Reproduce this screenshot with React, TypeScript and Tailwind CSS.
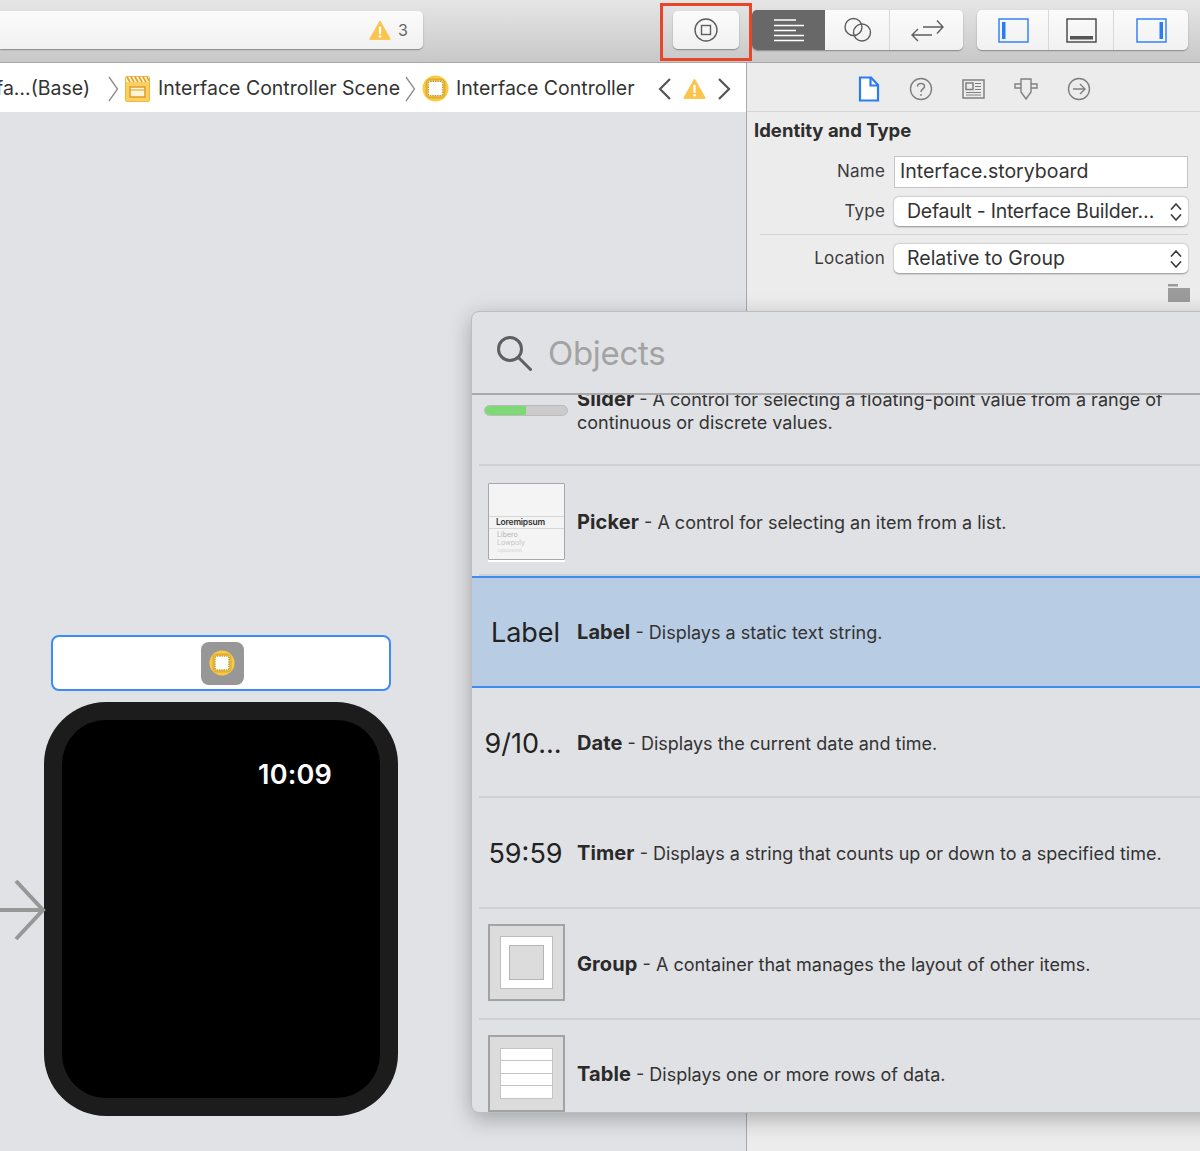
import type { ReactNode } from "react"

const font = "font-['Inter','Liberation_Sans',sans-serif]"

function Warning({ size = 22 }: { size?: number }) {
  return (
    <svg width={size} height={size * 0.92} viewBox="0 0 24 22">
      <path d="M12 1 L23 20.5 Q23.5 21.5 22 21.5 L2 21.5 Q0.5 21.5 1 20.5 Z" fill="#fcc44c" stroke="#fcc44c" strokeLinejoin="round" />
      <rect x="10.8" y="7" width="2.4" height="8.5" rx="1" fill="#fff" />
      <circle cx="12" cy="18" r="1.4" fill="#fff" />
    </svg>
  )
}

function ControllerIcon({ size = 27 }: { size?: number }) {
  return (
    <svg width={size} height={size} viewBox="0 0 28 28">
      <circle cx="14" cy="14" r="13.5" fill="#fdc943" />
      <rect x="6.5" y="6.5" width="15" height="15" rx="2" fill="#fff" stroke="#b99a3c" strokeWidth="1.5" strokeDasharray="1.5 1" />
      <rect x="4.5" y="4.5" width="19" height="19" rx="4" fill="none" stroke="#dcae36" strokeWidth="1.5" />
    </svg>
  )
}

function SceneIcon() {
  return (
    <svg width="25" height="26" viewBox="0 0 25 26">
      <rect x="0.5" y="0.5" width="24" height="25" rx="1.5" fill="#fdcf5e" stroke="#f0b840" />
      <path d="M1 1 H24 V6 H1 Z" fill="#fff3cf" />
      <path d="M2 1 L5 6 M6 1 L9 6 M10 1 L13 6 M14 1 L17 6 M18 1 L21 6 M22 1 L24 5" stroke="#dea02e" strokeWidth="1.5" />
      <rect x="5" y="11" width="15" height="10" fill="#fff4d4" stroke="#d99f2c" strokeWidth="1.5" />
      <path d="M5 14 H20" stroke="#d99f2c" strokeWidth="1" />
    </svg>
  )
}

function Chevron() {
  return (
    <svg width="11" height="26" viewBox="0 0 11 26" className="shrink-0">
      <path d="M1 1 L9.5 13 L1 25" fill="none" stroke="#8c8c8c" strokeWidth="1.3" />
    </svg>
  )
}

function Updown() {
  return (
    <svg width="14" height="22" viewBox="0 0 14 22" className="shrink-0">
      <path d="M2.5 8 L7 3 L11.5 8 M2.5 14 L7 19 L11.5 14" fill="none" stroke="#3d3d3d" strokeWidth="1.7" strokeLinecap="round" strokeLinejoin="round" />
    </svg>
  )
}

function FieldRow({ label, children }: { label: string; children: ReactNode }) {
  return (
    <div className="flex items-center">
      <div className="w-[140px] text-right text-[17px] text-[#3c3c3c] pr-[9px] tracking-[0.2px]">{label}</div>
      {children}
    </div>
  )
}

function Select({ value, tight }: { value: string; tight?: boolean }) {
  return (
    <div className="w-[294px] h-[29px] bg-white rounded-[5px] shadow-[0_0.5px_2px_rgba(0,0,0,0.4)] flex items-center justify-between pl-[13px] pr-[5px] text-[19.5px] text-[#333]">
      <span className={tight ? "tracking-[-0.25px]" : ""}>{value}</span>
      <Updown />
    </div>
  )
}

function Row({ art, title, desc, selected, first, height, shift }: { art: ReactNode; title: string; desc: ReactNode; selected?: boolean; first?: boolean; height?: string; shift?: string }) {
  return (
    <div className={`relative flex shrink-0 ${first ? "h-[71px] items-start" : selected ? "h-[112px] items-center bg-[#b8cce4] border-y-[2px] border-[#3d8af0]" : `${height ?? "h-[110.7px]"} items-center`}`}>
      <div className={`w-[105px] shrink-0 flex justify-center pl-[2px] ${first ? "pt-[10px]" : ""}`}>{art}</div>
      <div className={`text-[18px] text-[#333] ${shift ?? ""} ${first ? "-mt-[7px] w-[600px] leading-[23px]" : "leading-[24px]"}`}>
        <span className="font-bold text-[20px] text-[#2a2a2a] tracking-[0.1px]">{title}</span> - {desc}
      </div>
      {!selected && <div className="absolute left-[7px] right-0 bottom-0 h-[2px] bg-[#cfd0d3]" />}
    </div>
  )
}

function RowText({ children, className }: { children: ReactNode; className?: string }) {
  return <div className={`text-[27px] leading-none text-[#222] whitespace-nowrap ${className ?? ""}`}>{children}</div>
}

function Thumb({ children, className }: { children: ReactNode; className: string }) {
  return <div className={`ml-[2px] w-[77px] h-[77px] bg-[#dcdcdc] border-[2px] border-[#a3a3a3] flex items-center justify-center ${className}`}>{children}</div>
}

export default function App() {
  return (
    <div className={`${font} relative w-[1200px] h-[1151px] overflow-hidden bg-[#e0e2e6] flex flex-col`}>
      {/* toolbar */}
      <div className="h-[63px] shrink-0 bg-gradient-to-b from-[#e6e6e6] to-[#c8c8c8] border-b border-[#a9a9a9] flex items-center pb-[2px]">
        <div className="w-[423px] h-[38px] rounded-r-[5px] bg-gradient-to-b from-[#fbfbfb] to-[#f1f1f1] shadow-[0_1px_1.5px_rgba(0,0,0,0.35)] flex items-center justify-end gap-[7px] pr-[15px] shrink-0">
          <Warning />
          <span className="text-[16px] text-[#666]">3</span>
        </div>
        <div className="relative ml-[250px] w-[66px] h-[38px] rounded-[5px] bg-gradient-to-b from-[#fbfbfb] to-[#f1f1f1] shadow-[0_1px_1.5px_rgba(0,0,0,0.35)] flex items-center justify-center shrink-0">
          <svg width="26" height="26" viewBox="0 0 26 26">
            <circle cx="13" cy="13" r="11" fill="none" stroke="#5e5e5e" strokeWidth="1.4" />
            <rect x="8.5" y="8.5" width="9" height="9" fill="none" stroke="#5e5e5e" strokeWidth="1.4" />
          </svg>
          <div className="absolute -left-[13px] -top-[8.5px] w-[92px] h-[58px] border-[3px] border-[#ea4429]" />
        </div>
        <div className="ml-[13px] w-[211px] h-[40px] flex rounded-[5px] overflow-hidden bg-gradient-to-b from-[#fbfbfb] to-[#f1f1f1] shadow-[0_1px_1.5px_rgba(0,0,0,0.35)] shrink-0">
          <div className="w-[73px] bg-[#686868] flex items-center justify-center">
            <svg width="32" height="24" viewBox="0 0 32 24" stroke="#fff" strokeWidth="1.4">
              <path d="M1 2 H23 M1 7.5 H31 M1 12.5 H23 M1 17.5 H31 M1 22.5 H31" />
            </svg>
          </div>
          <div className="w-[65px] border-r border-[#d8d8d8] flex items-center justify-center">
            <svg width="30" height="26" viewBox="0 0 30 26" fill="none" stroke="#5e5e5e" strokeWidth="1.4">
              <circle cx="11.5" cy="10" r="8.5" />
              <circle cx="20" cy="15.5" r="8.5" />
            </svg>
          </div>
          <div className="flex-1 flex items-center justify-center">
            <svg width="34" height="26" viewBox="0 0 34 26" fill="none" stroke="#5e5e5e" strokeWidth="1.4">
              <path d="M13 10 H33 M27 3.5 L33 10 L27 16.5 M22 18 H2 M8 12 L2 18 L8 24" />
            </svg>
          </div>
        </div>
        <div className="ml-[14px] w-[211px] h-[40px] flex rounded-[5px] bg-gradient-to-b from-[#fbfbfb] to-[#f1f1f1] shadow-[0_1px_1.5px_rgba(0,0,0,0.35)] shrink-0">
          <div className="w-[72px] pl-[2px] border-r border-[#d8d8d8] flex items-center justify-center">
            <svg width="31" height="25" viewBox="0 0 31 25" fill="none">
              <rect x="1" y="1" width="29" height="23" stroke="#2a7cf6" strokeWidth="1.4" />
              <rect x="4" y="4" width="3.5" height="17" fill="#2a7cf6" />
            </svg>
          </div>
          <div className="w-[65px] pl-[1px] border-r border-[#d8d8d8] flex items-center justify-center">
            <svg width="31" height="25" viewBox="0 0 31 25" fill="none">
              <rect x="1" y="1" width="29" height="23" stroke="#444" strokeWidth="1.4" />
              <rect x="4" y="18" width="23" height="3.5" fill="#555" />
            </svg>
          </div>
          <div className="flex-1 flex items-center justify-center">
            <svg width="31" height="25" viewBox="0 0 31 25" fill="none">
              <rect x="1" y="1" width="29" height="23" stroke="#2a7cf6" strokeWidth="1.4" />
              <rect x="23.5" y="4" width="3.5" height="17" fill="#2a7cf6" />
            </svg>
          </div>
        </div>
      </div>

      <div className="flex flex-1 min-h-0">
        {/* editor */}
        <div className="w-[746px] shrink-0 flex flex-col">
          <div className="h-[49px] pt-[2px] bg-white flex items-center text-[19.5px] text-[#333] whitespace-nowrap shrink-0 overflow-hidden">
            <span className="-ml-[4px]">fa…(Base)</span>
            <span className="ml-[18px]"><Chevron /></span>
            <span className="ml-[6px]"><SceneIcon /></span>
            <span className="ml-[8px]">Interface Controller Scene</span>
            <span className="ml-[5px]"><Chevron /></span>
            <span className="ml-[6px]"><ControllerIcon /></span>
            <span className="ml-[7px]">Interface Controller</span>
            <svg width="14" height="24" viewBox="0 0 14 24" className="ml-[23px] shrink-0"><path d="M12 2 L2 12 L12 22" fill="none" stroke="#555" strokeWidth="2.2" /></svg>
            <span className="ml-[11px]"><Warning size={23} /></span>
            <svg width="14" height="24" viewBox="0 0 14 24" className="ml-[11px] shrink-0"><path d="M2 2 L12 12 L2 22" fill="none" stroke="#555" strokeWidth="2.2" /></svg>
          </div>
          <div className="relative flex-1">
            <div className="absolute left-[51px] top-[523px] w-[340px] h-[56px] bg-white border-[2px] border-[#3b8cf7] rounded-[8px] flex items-center justify-center pl-[2px]">
              <div className="w-[43px] h-[43px] bg-[#979797] rounded-[8px] flex items-center justify-center">
                <ControllerIcon size={26} />
              </div>
            </div>
            <div className="absolute left-[44px] top-[590px] w-[354px] h-[414px] bg-[#1c1c1c] rounded-[62px] p-[18px]">
              <div className="w-full h-full bg-black rounded-[44px] flex justify-end pt-[40px] pr-[48px]">
                <span className="text-[27px] leading-[30px] font-semibold text-white tracking-[0.2px]">10:09</span>
              </div>
            </div>
            <svg width="46" height="62" viewBox="0 0 46 62" className="absolute left-0 top-[767px]" fill="none" stroke="#979797" strokeWidth="4">
              <path d="M0 31 H43 M16 2 L43 31 L16 60" />
            </svg>
          </div>
        </div>

        {/* inspector */}
        <div className="flex-1 bg-[#ececec] border-l border-[#a9a9a9] flex flex-col">
          <div className="h-[49px] shrink-0 flex items-center pl-[112px] pt-[4px] gap-[29px] border-b border-[#d4d4d4]">
            <svg width="22" height="26" viewBox="0 0 22 26" fill="none" stroke="#2a7cf6" strokeWidth="2.2" className="-ml-[1px]">
              <path d="M2 1.5 H13 L20 9 V24.5 H2 Z" fill="#fff" />
              <path d="M12.5 2 V9.5 H20" />
            </svg>
            <svg width="24" height="24" viewBox="0 0 24 24" fill="none" stroke="#808080" strokeWidth="1.4">
              <circle cx="12" cy="12" r="10.5" />
              <path d="M8.5 9.5 C8.5 5.5 15.5 5.5 15.5 9.5 C15.5 12 12 12 12 15" strokeWidth="1.6" />
              <circle cx="12" cy="18" r="0.9" fill="#808080" stroke="none" />
            </svg>
            <svg width="23" height="20" viewBox="0 0 23 20" fill="none" stroke="#808080" strokeWidth="1.5">
              <rect x="1" y="1" width="21" height="18" />
              <rect x="4" y="4" width="7" height="6.5" />
              <path d="M13 4.5 H19 M13 7.5 H19 M13 10.5 H19 M4 13.5 H19 M4 16 H19" strokeWidth="1.2" />
            </svg>
            <svg width="24" height="24" viewBox="0 0 24 24" fill="none" stroke="#808080" strokeWidth="1.4">
              <path d="M7 2 H17 V15 L12 22 L7 15 Z M7 7 H1 V11 H7 M17 7 H23 V11 H17" />
            </svg>
            <svg width="24" height="24" viewBox="0 0 24 24" fill="none" stroke="#808080" strokeWidth="1.4">
              <circle cx="12" cy="12" r="10.5" />
              <path d="M6 12 H18 M13 7 L18 12 L13 17" />
            </svg>
          </div>
          <div className="pl-[7px] pt-[7px] text-[18.5px] leading-[22px] font-bold text-[#2e2e2e]">Identity and Type</div>
          <div className="pl-[7px] mt-[15px] flex flex-col gap-[9px]">
            <FieldRow label="Name">
              <div className="w-[294px] h-[32px] bg-white border border-[#c4c4c4] flex items-center pl-[5px] text-[19.5px] text-[#333]">Interface.storyboard</div>
            </FieldRow>
            <FieldRow label="Type"><Select tight value="Default - Interface Builder…" /></FieldRow>
          </div>
          <div className="ml-[13px] mr-[12px] mt-[8px] mb-[9px] h-[1px] bg-[#d2d2d2]" />
          <div className="pl-[7px]">
            <FieldRow label="Location"><Select value="Relative to Group" /></FieldRow>
          </div>
          <div className="flex justify-end pr-[10px] mt-[11px]">
            <svg width="22" height="18" viewBox="0 0 22 18" fill="#9b9b9b">
              <rect x="0" y="0" width="10" height="2.5" />
              <rect x="0" y="4" width="22" height="14" />
            </svg>
          </div>
        </div>
      </div>

      {/* objects popover */}
      <div className="absolute left-[471px] top-[311px] w-[760px] h-[802px] bg-[#e0e1e4] rounded-l-[8px] border border-[#bdbdbd] shadow-[0_6px_22px_rgba(0,0,0,0.28)] flex flex-col overflow-hidden">
        <div className="h-[83px] shrink-0 border-b-[2px] border-[#a9a9aa] flex items-center pl-[24px] gap-[16px]">
          <svg width="36" height="36" viewBox="0 0 36 36" fill="none" stroke="#5f5f5f" strokeWidth="3">
            <circle cx="14" cy="14" r="11.5" />
            <path d="M22.5 22.5 L34.5 34.5" strokeLinecap="round" />
          </svg>
          <span className="text-[33px] leading-none text-[#a3a3a3] tracking-[-0.3px] pt-[1px]">Objects</span>
        </div>
        <div className="flex-1 min-h-0 overflow-hidden flex flex-col w-[729px]">
          <Row
            first
            title="Slider"
            desc={<>A control for selecting a floating-point value from a range of<br />continuous or discrete values.</>}
            art={
              <div className="w-[84px] h-[11px] rounded-full bg-[#cbcbcb] border border-[#bbb] overflow-hidden">
                <div className="w-[41px] h-full bg-[#7dd976]" />
              </div>
            }
          />
          <Row
            height="h-[109.7px]"
            shift="mt-[3px]"
            title="Picker"
            desc="A control for selecting an item from a list."
            art={
              <div className="ml-[2px] mt-[2px] w-[77px] h-[77px] bg-[#f4f4f4] border border-[#a8a8a8] rounded-[1px] flex flex-col pt-[32px] shadow-[0_2px_0_#fff]">
                <div className="h-[13px] border-y border-[#d6d6d6] pl-[7px] text-[8.5px] leading-[11px] font-semibold text-[#333] tracking-[-0.2px]">Loremipsum</div>
                <div className="pl-[8px] text-[7px] leading-[8px] text-[#b5b5b5] mt-[2px]">Libero</div>
                <div className="pl-[8px] text-[7px] leading-[8px] text-[#c4c4c4]">Lowpoly</div>
                <div className="pl-[9px] text-[4px] leading-[7px] text-[#d0d0d0]">Cjdoloremsit</div>
              </div>
            }
          />
          <Row selected shift="mt-[2px]" title="Label" desc="Displays a static text string." art={<RowText className="mt-[2px]">Label</RowText>} />
          <Row title="Date" desc="Displays the current date and time." art={<RowText className="-ml-[5px]">9/10…</RowText>} />
          <Row title="Timer" desc="Displays a string that counts up or down to a specified time." art={<RowText>59:59</RowText>} />
          <Row
            title="Group"
            desc="A container that manages the layout of other items."
            art={
              <Thumb className="-mt-[3px]">
                <div className="w-[53px] h-[53px] bg-white border border-[#bdbdbd] flex items-center justify-center">
                  <div className="w-[35px] h-[35px] bg-[#dcdcdc] border border-[#b5b5b5]" />
                </div>
              </Thumb>
            }
          />
          <Row
            shift="-mt-[2px]"
            title="Table"
            desc="Displays one or more rows of data."
            art={
              <Thumb className="-mt-[4px]">
                <div className="w-[53px] h-[51px] bg-[#c4c4c4] p-[1px] flex flex-col gap-[1px]">
                  <div className="flex-1 bg-white" />
                  <div className="flex-1 bg-white" />
                  <div className="flex-1 bg-white" />
                  <div className="flex-1 bg-white" />
                </div>
              </Thumb>
            }
          />
        </div>
      </div>
    </div>
  )
}
